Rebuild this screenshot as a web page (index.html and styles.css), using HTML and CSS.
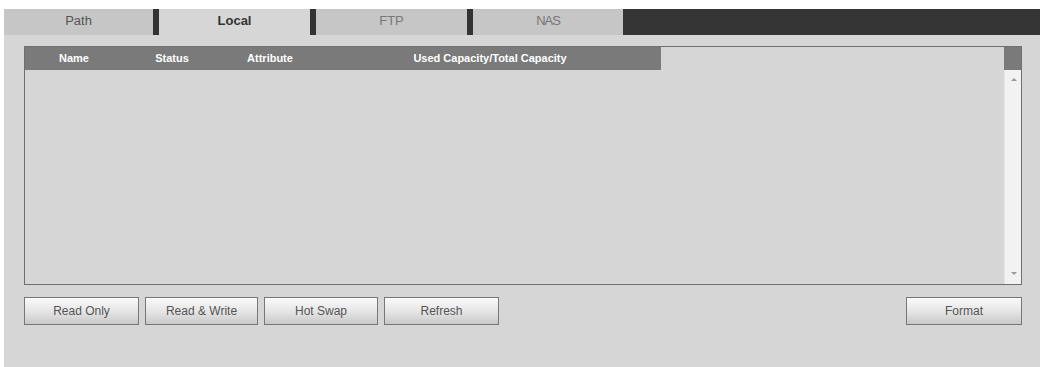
FILE: index.html
```html
<!DOCTYPE html>
<html>

<head>
    <title>Storage - Local</title>
    <link rel="stylesheet" href="styles.css">
</head>

<body>
    <div class="page">
        <div class="tabs">
            <div class="tab tab-path">Path</div>
            <div class="tab tab-active">Local</div>
            <div class="tab tab-ftp">FTP</div>
            <div class="tab tab-nas">NAS</div>
            <div class="tab-rest"></div>
        </div>
        <div class="panel">
            <div class="grid-box">
                <div class="grid-main">
                    <div class="grid-head">
                        <div class="col">Name</div>
                        <div class="col">Status</div>
                        <div class="col">Attribute</div>
                        <div class="col">Used Capacity/Total Capacity</div>
                    </div>
                </div>
                <div class="scrollbar">
                    <div class="scroll-top"></div>
                    <div class="scroll-track">
                        <span class="arrow arrow-up"></span>
                        <span class="arrow arrow-down"></span>
                    </div>
                </div>
            </div>
            <div class="actions">
                <button class="btn">Read Only</button>
                <button class="btn btn-narrow">Read &amp; Write</button>
                <button class="btn btn-mid">Hot Swap</button>
                <button class="btn">Refresh</button>
                <button class="btn btn-format">Format</button>
            </div>
        </div>
    </div>
</body>

</html>
```

FILE: styles.css
```css
body {
    margin: 0;
    background: #fff;
    font-family: "Liberation Sans", Arial, sans-serif;
}

.page {
    padding-top: 9px;
    margin-left: 4px;
    width: 1036px;
}

.tabs {
    display: flex;
    height: 26px;
    background: #333;
}

.tab {
    height: 26px;
    line-height: 24px;
    text-align: center;
    font-size: 13px;
    background: #c6c6c6;
    color: #666;
    margin-right: 6px;
}

.tab-path {
    width: 149px;
    color: #555;
}

.tab-active {
    width: 151px;
    background: #d6d6d6;
    color: #333;
    font-weight: bold;
}

.tab-ftp {
    width: 151px;
    color: #777;
}

.tab-nas {
    width: 150px;
    margin-right: 0;
    color: #777;
    letter-spacing: -1px;
}

.tab-rest {
    flex: 1;
    background: #353535;
}

.panel {
    background: #d6d6d6;
    height: 332px;
    padding: 11px 0 0 20px;
    box-sizing: border-box;
}

.grid-box {
    display: flex;
    width: 998px;
    height: 239px;
    border: 1px solid #6f6f6f;
    box-sizing: border-box;
    background: #d6d6d6;
}

.grid-main {
    flex: 1;
}

.grid-head {
    display: grid;
    grid-template-columns: 98px 98px 98px 342px;
    width: 636px;
    height: 23px;
    background: #7a7a7a;
    color: #fff;
    font-size: 11px;
    font-weight: bold;
    line-height: 22px;
}

.col {
    text-align: center;
}

.scrollbar {
    width: 17px;
    display: flex;
    flex-direction: column;
}

.scroll-top {
    height: 23px;
    background: #7a7a7a;
}

.scroll-track {
    flex: 1;
    position: relative;
    background: #f2f2f2;
    border-left: 1px solid #e6e6e6;
}

.arrow {
    position: absolute;
    left: 6px;
    width: 0;
    height: 0;
    border-left: 3px solid transparent;
    border-right: 3px solid transparent;
}

.arrow-up {
    top: 8px;
    border-bottom: 3px solid #999;
}

.arrow-down {
    bottom: 9px;
    border-top: 3px solid #999;
}

.actions {
    display: flex;
    gap: 6px;
    width: 998px;
    margin-top: 12px;
}

.btn {
    width: 115px;
    height: 28px;
    border: 1px solid #777;
    background: linear-gradient(#fafafa, #e4e4e4 55%, #c8c8c8);
    color: #555;
    font-family: "Liberation Sans", Arial, sans-serif;
    font-size: 12px;
    padding: 0;
}

.btn-narrow {
    width: 113px;
}

.btn-mid {
    width: 114px;
}

.btn-format {
    margin-left: auto;
    width: 116px;
}
```
